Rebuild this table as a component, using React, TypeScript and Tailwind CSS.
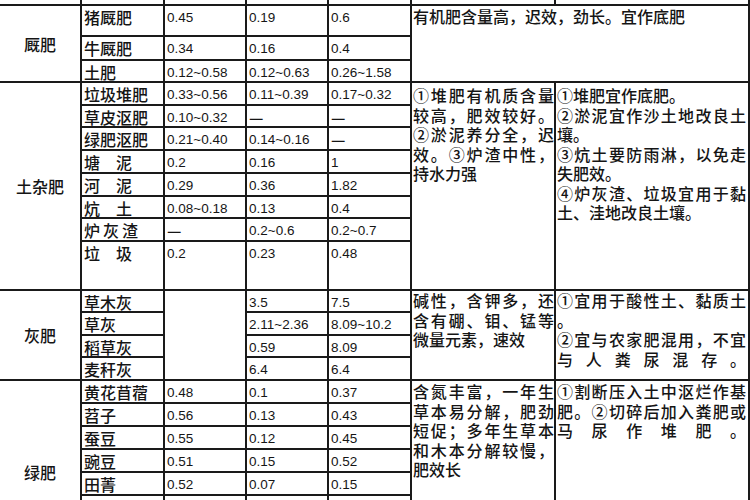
import React from "react";

const CJK = "font-['Noto_Sans_CJK_SC','Noto_Sans',sans-serif] font-medium";
const NUM = "font-['Liberation_Sans',Arial,sans-serif] text-[13.5px]";

function Group({ label, span }: { label: string; span: string }) {
  return (
    <div className={`${span} bg-white flex items-center justify-center text-[16px] ${CJK}`}>
      {label}
    </div>
  );
}

function Name({ t, cls = "" }: { t: string; cls?: string }) {
  return (
    <div className={`bg-white pl-[2px] pt-[1px] text-[16px] leading-[20px] whitespace-nowrap ${CJK} ${cls}`}>
      {t}
    </div>
  );
}

function Num({ v }: { v: string }) {
  if (v === "—") {
    return (
      <div className={`bg-white pl-[2px] pt-[1px] text-[16px] leading-[20px] ${CJK}`}>—</div>
    );
  }
  return <div className={`bg-white pl-[2px] pt-[2px] leading-[20px] ${NUM}`}>{v}</div>;
}

function J({ t }: { t: string }) {
  return (
    <div className="flex justify-between h-[19.5px]">
      {Array.from(t).map((c, i) => (
        <span key={i}>{c}</span>
      ))}
    </div>
  );
}

function L({ t }: { t: string }) {
  return <div className="h-[19.5px]">{t}</div>;
}

function Row({ name, n, p, k, cls }: { name: string; n?: string; p: string; k: string; cls?: string }) {
  return (
    <>
      <Name t={name} cls={cls} />
      {n !== undefined && <Num v={n} />}
      <Num v={p} />
      <Num v={k} />
    </>
  );
}

export default function App() {
  return (
    <div className="w-[750px] h-[500px] overflow-hidden bg-white text-[#151515]">
      <div className="w-[750px] grid grid-cols-[80px_81px_80px_80px_81px_142px_192px] grid-rows-[4px_29px_22px_20px_21px_20px_21px_21px_21px_20px_21px_47px_20px_21px_20px_21px_21px_21px_21px_21px_21px_21px_21px_21px] gap-[2px] bg-[#1a1a1a] pr-[2px]">
        {/* header remnant */}
        <div className="bg-white" />
        <div className="bg-white" />
        <div className="bg-white" />
        <div className="bg-white" />
        <div className="bg-white" />
        <div className="bg-white" />
        <div className="bg-white" />

        {/* 厩肥 */}
        <Group label="厩肥" span="row-span-3" />
        <Row name="猪厩肥" n="0.45" p="0.19" k="0.6" />
        <div className={`col-span-2 row-span-3 bg-white pl-[1px] pt-0 text-[16px] leading-[20px] ${CJK}`}>
          有机肥含量高，迟效，劲长。宜作底肥
        </div>
        <Row name="牛厩肥" n="0.34" p="0.16" k="0.4" />
        <Row name="土肥" n="0.12~0.58" p="0.12~0.63" k="0.26~1.58" />

        {/* 土杂肥 */}
        <Group label="土杂肥" span="row-span-8" />
        <Row name="垃圾堆肥" n="0.33~0.56" p="0.11~0.39" k="0.17~0.32" />
        <div className={`row-span-8 bg-white pl-[1px] pt-[3px] text-[16px] leading-[19.5px] ${CJK}`}>
          <J t="①堆肥有机质含量" />
          <J t="较高，肥效较好。" />
          <J t="②淤泥养分全，迟" />
          <J t="效。③炉渣中性，" />
          <L t="持水力强" />
        </div>
        <div className={`row-span-8 bg-white pl-[1px] pr-[2px] pt-[3px] text-[16px] leading-[19.5px] ${CJK}`}>
          <L t="①堆肥宜作底肥。" />
          <J t="②淤泥宜作沙土地改良土" />
          <L t="壤。" />
          <J t="③炕土要防雨淋，以免走" />
          <L t="失肥效。" />
          <J t="④炉灰渣、垃圾宜用于黏" />
          <L t="土、洼地改良土壤。" />
        </div>
        <Row name="草皮沤肥" n="0.10~0.32" p="—" k="—" />
        <Row name="绿肥沤肥" n="0.21~0.40" p="0.14~0.16" k="—" />
        <Row name="塘　泥" n="0.2" p="0.16" k="1" />
        <Row name="河　泥" n="0.29" p="0.36" k="1.82" />
        <Row name="炕　土" n="0.08~0.18" p="0.13" k="0.4" />
        <Row name="炉灰渣" n="—" p="0.2~0.6" k="0.2~0.7" cls="tracking-[3px]" />
        <Row name="垃　圾" n="0.2" p="0.23" k="0.48" />

        {/* 灰肥 */}
        <Group label="灰肥" span="row-span-4" />
        <Name t="草木灰" />
        <div className="row-span-4 bg-white" />
        <Num v="3.5" />
        <Num v="7.5" />
        <div className={`row-span-4 bg-white pl-[1px] pt-0 text-[16px] leading-[19.5px] ${CJK}`}>
          <J t="碱性，含钾多，还" />
          <J t="含有硼、钼、锰等" />
          <L t="微量元素，速效" />
        </div>
        <div className={`row-span-4 bg-white pl-[1px] pr-[2px] pt-0 text-[16px] leading-[19.5px] ${CJK}`}>
          <J t="①宜用于酸性土、黏质土" />
          <L t="。" />
          <J t="②宜与农家肥混用，不宜" />
          <J t="与人粪尿混存。" />
        </div>
        <Row name="草灰" p="2.11~2.36" k="8.09~10.2" />
        <Row name="稻草灰" p="0.59" k="8.09" />
        <Row name="麦秆灰" p="6.4" k="6.4" />

        {/* 绿肥 */}
        <Group label="绿肥" span="row-span-8" />
        <Row name="黄花苜蓿" n="0.48" p="0.1" k="0.37" />
        <div className={`row-span-8 bg-white pl-[1px] pt-[1px] text-[16px] leading-[19.5px] ${CJK}`}>
          <J t="含氮丰富，一年生" />
          <J t="草本易分解，肥劲" />
          <J t="短促；多年生草本" />
          <J t="和木本分解较慢，" />
          <L t="肥效长" />
        </div>
        <div className={`row-span-8 bg-white pl-[1px] pr-[2px] pt-[1px] text-[16px] leading-[19.5px] ${CJK}`}>
          <J t="①割断压入土中沤烂作基" />
          <J t="肥。②切碎后加入粪肥或" />
          <J t="马尿作堆肥。" />
        </div>
        <Row name="苕子" n="0.56" p="0.13" k="0.43" />
        <Row name="蚕豆" n="0.55" p="0.12" k="0.45" />
        <Row name="豌豆" n="0.51" p="0.15" k="0.52" />
        <Row name="田菁" n="0.52" p="0.07" k="0.15" />
        <Row name="紫穗槐" n="1.32" p="0.36" k="0.79" />
        <Row name="紫云英" n="0.33" p="0.08" k="0.23" />
        <Row name="箭舌豌豆" n="0.54" p="0.06" k="0.32" />
      </div>
    </div>
  );
}
